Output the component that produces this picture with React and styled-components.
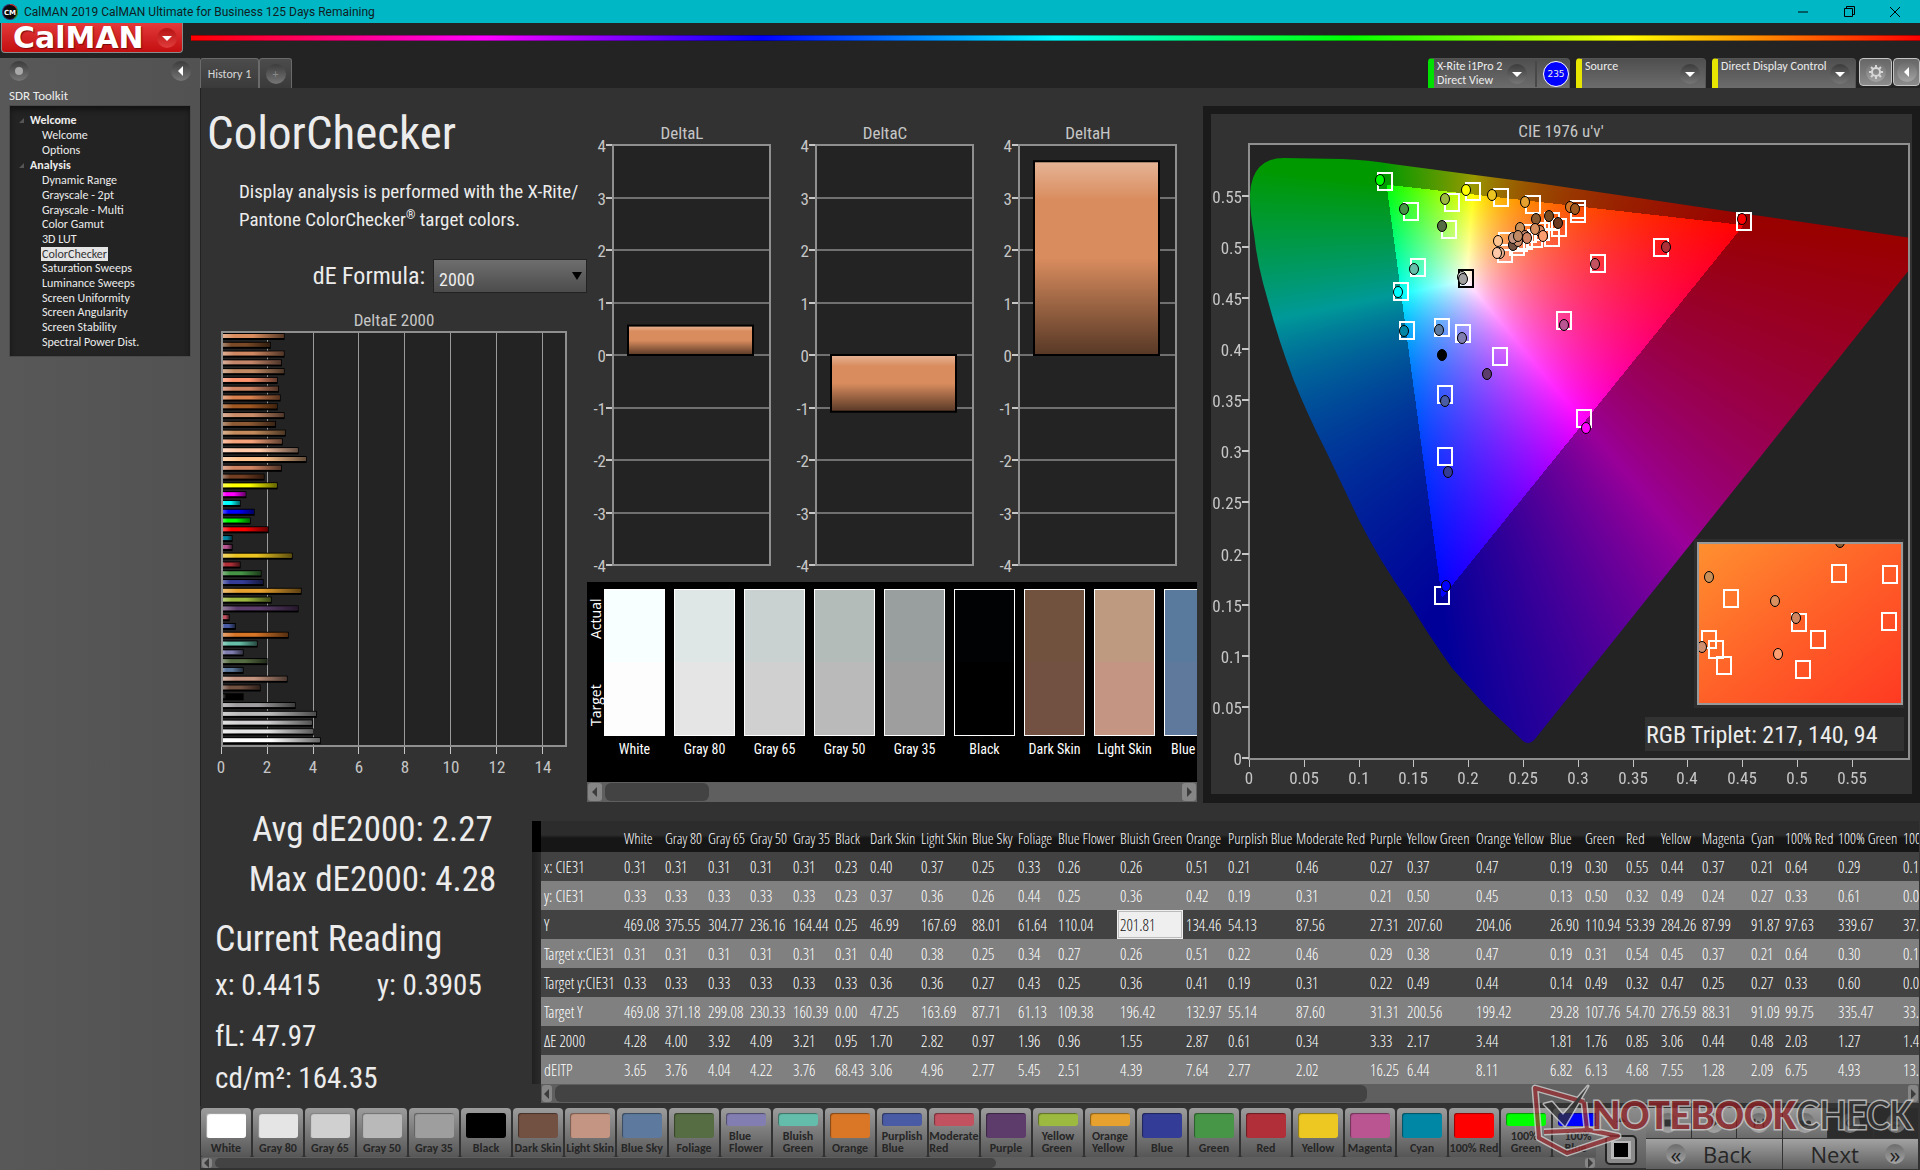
import React, { useEffect, useRef } from 'react';
import styled, { createGlobalStyle, css } from 'styled-components';

const ui = '"Carlito", "Lato", sans-serif';
const report = '"Roboto Condensed", "Roboto", sans-serif';
const narrow = '"Open Sans Condensed Light", "Roboto Condensed", "Open Sans", sans-serif';

const GlobalStyle = createGlobalStyle`
	* {
		box-sizing: border-box;
	}

	body {
		margin: 0;
		background: #232323;
		color: #ececec;
		font-family: ${ui};
		font-size: 12px;
		overflow: hidden;
	}

	button,
	select {
		margin: 0;
		padding: 0;
		border: 0;
		font: inherit;
		color: inherit;
	}

	a {
		color: inherit;
		text-decoration: none;
	}
`;

/* ---------- data ---------- */

const tree = [
	{ name: 'Welcome', items: ['Welcome', 'Options'] },
	{
		name: 'Analysis',
		items: [
			'Dynamic Range',
			'Grayscale - 2pt',
			'Grayscale - Multi',
			'Color Gamut',
			'3D LUT',
			'ColorChecker',
			'Saturation Sweeps',
			'Luminance Sweeps',
			'Screen Uniformity',
			'Screen Angularity',
			'Screen Stability',
			'Spectral Power Dist.',
		],
	},
];

// top to bottom: [color, dE2000]
const deltaE = [
	['#d98c5e', 2.72], ['#7a4a26', 2.12], ['#cf8862', 2.72], ['#c4866a', 2.6], ['#c28a64', 2.72],
	['#ff9470', 2.42], ['#cf8464', 2.48], ['#d8804e', 2.55], ['#a05822', 2.42], ['#cb8c6a', 2.72],
	['#8e5a34', 2.35], ['#c48c5c', 2.77], ['#f5a27a', 2.64], ['#ffc8a8', 3.33], ['#ffc490', 3.68],
	['#cf8462', 2.6], ['#733e22', 1.85], ['#ffff00', 2.42], ['#ff00ff', 1.06], ['#00ffff', 0.81],
	['#0000ff', 1.42], ['#00ff00', 1.25], ['#ff0000', 2.03], ['#0086a4', 0.46], ['#ba5493', 0.46],
	['#ebc422', 3.07], ['#b03038', 0.81], ['#469546', 1.72], ['#343c96', 1.81], ['#e6a02e', 3.46],
	['#9cba40', 2.16], ['#5c3d6b', 3.33], ['#c45260', 0.33], ['#4a5ca4', 0.6], ['#d87628', 2.9],
	['#66bfa8', 1.55], ['#807eb0', 0.94], ['#566c42', 1.98], ['#5d799d', 0.94], ['#c49580', 2.85],
	['#735141', 1.68], ['#000000', 0.94], ['#9f9d9f', 3.2], ['#bababa', 4.12], ['#d2d0d2', 3.94],
	['#e5e5e5', 3.99], ['#ffffff', 4.29],
];

const deltas = [
	{ title: 'DeltaL', value: 0.56 },
	{ title: 'DeltaC', value: -1.08 },
	{ title: 'DeltaH', value: 3.69 },
];

const swatches = [
	['White', '#f8ffff', '#fdfdfd'],
	['Gray 80', '#dfe7e6', '#e5e5e5'],
	['Gray 65', '#cad2d1', '#d0d0d0'],
	['Gray 50', '#b4bcba', '#bababa'],
	['Gray 35', '#999f9e', '#9e9e9e'],
	['Black', '#010204', '#000000'],
	['Dark Skin', '#71523e', '#735142'],
	['Light Skin', '#be9a80', '#c49582'],
	['Blue Sky', '#5a7a9d', '#5f799d'],
];

const patches = [
	['White', '#ffffff'], ['Gray 80', '#e5e5e5'], ['Gray 65', '#d0d0d0'], ['Gray 50', '#b9b9b9'],
	['Gray 35', '#9e9e9e'], ['Black', '#000000'], ['Dark Skin', '#735142'], ['Light Skin', '#c49582'],
	['Blue Sky', '#5d7a9e'], ['Foliage', '#566c42'], ['Blue Flower', '#827eb1'], ['Bluish Green', '#64bdaa'],
	['Orange', '#d97727'], ['Purplish Blue', '#4a5ba5'], ['Moderate Red', '#c35260'], ['Purple', '#5d3c6b'],
	['Yellow Green', '#9dba40'], ['Orange Yellow', '#e6a12e'], ['Blue', '#333c96'], ['Green', '#479648'],
	['Red', '#b02f39'], ['Yellow', '#edc822'], ['Magenta', '#ba5592'], ['Cyan', '#0087a5'],
	['100% Red', '#ff0000'], ['100% Green', '#00ff00'], ['100% Blue', '#0000ff'],
];

const columns = [
	['White', 41], ['Gray 80', 43], ['Gray 65', 42], ['Gray 50', 43], ['Gray 35', 42], ['Black', 35],
	['Dark Skin', 51], ['Light Skin', 51], ['Blue Sky', 46], ['Foliage', 40], ['Blue Flower', 62],
	['Bluish Green', 66], ['Orange', 42], ['Purplish Blue', 68], ['Moderate Red', 74], ['Purple', 37],
	['Yellow Green', 69], ['Orange Yellow', 74], ['Blue', 35], ['Green', 41], ['Red', 35], ['Yellow', 41],
	['Magenta', 49], ['Cyan', 34], ['100% Red', 53], ['100% Green', 65], ['100% Blue', 60],
];

const rows = [
	['x: CIE31', '0.31 0.31 0.31 0.31 0.31 0.23 0.40 0.37 0.25 0.33 0.26 0.26 0.51 0.21 0.46 0.27 0.37 0.47 0.19 0.30 0.55 0.44 0.37 0.21 0.64 0.29 0.15'],
	['y: CIE31', '0.33 0.33 0.33 0.33 0.33 0.23 0.37 0.36 0.26 0.44 0.25 0.36 0.42 0.19 0.31 0.21 0.50 0.45 0.13 0.50 0.32 0.49 0.24 0.27 0.33 0.61 0.06'],
	['Y', '469.08 375.55 304.77 236.16 164.44 0.25 46.99 167.69 88.01 61.64 110.04 201.81 134.46 54.13 87.56 27.31 207.60 204.06 26.90 110.94 53.39 284.26 87.99 91.87 97.63 339.67 37.05'],
	['Target x:CIE31', '0.31 0.31 0.31 0.31 0.31 0.31 0.40 0.38 0.25 0.34 0.27 0.26 0.51 0.22 0.46 0.29 0.38 0.47 0.19 0.31 0.54 0.45 0.37 0.21 0.64 0.30 0.15'],
	['Target y:CIE31', '0.33 0.33 0.33 0.33 0.33 0.33 0.36 0.36 0.27 0.43 0.25 0.36 0.41 0.19 0.31 0.22 0.49 0.44 0.14 0.49 0.32 0.47 0.25 0.27 0.33 0.60 0.06'],
	['Target Y', '469.08 371.18 299.08 230.33 160.39 0.00 47.25 163.69 87.71 61.13 109.38 196.42 132.97 55.14 87.60 31.31 200.56 199.42 29.28 107.76 54.70 276.59 88.31 91.09 99.75 335.47 33.86'],
	['ΔE 2000', '4.28 4.00 3.92 4.09 3.21 0.95 1.70 2.82 0.97 1.96 0.96 1.55 2.87 0.61 0.34 3.33 2.17 3.44 1.81 1.76 0.85 3.06 0.44 0.48 2.03 1.27 1.42'],
	['dEITP', '3.65 3.76 4.04 4.22 3.76 68.43 3.06 4.96 2.77 5.45 2.51 4.39 7.64 2.77 2.02 16.25 6.44 8.11 6.82 6.13 4.68 7.55 1.28 2.09 6.75 4.93 13.04'],
];

// chart pixels inside the u'v' plot
const targets = [
	[135, 38], [223, 48], [202, 59], [251, 54], [161, 68], [199, 86], [283, 61], [328, 66], [328, 70],
	[494, 78], [411, 104], [348, 120], [302, 78], [309, 84], [302, 94], [292, 88], [285, 95], [279, 90],
	[275, 97], [270, 99], [267, 103], [256, 98], [255, 110], [168, 124], [151, 148], [157, 187],
	[192, 184], [213, 190], [314, 177], [250, 213], [195, 251], [334, 275], [195, 313], [192, 452],
];

const measured = [
	[130, 36, '#00ff00'], [216, 46, '#ffff00'], [195, 55, '#9cba40'], [242, 51, '#ebc422'],
	[154, 65, '#469546'], [192, 82, '#566c42'], [275, 58, '#e6a02e'], [320, 63, '#d87628'],
	[325, 65, '#a05a20'], [492, 75, '#ff0000'], [416, 103, '#b03038'], [345, 120, '#c45260'],
	[299, 72, '#7a4a20'], [286, 75, '#8a5a30'], [308, 79, '#6b3a20'], [270, 84, '#c89058'],
	[290, 87, '#cf8560'], [285, 85, '#d9905f'], [293, 92, '#ff9e70'], [275, 92, '#c4866a'],
	[277, 94, '#cf8464'], [263, 101, '#735141'], [268, 97, '#cb8c6a'], [263, 94, '#c49580'],
	[268, 92, '#c28a64'], [248, 97, '#ffc490'], [250, 109, '#e8b090'], [247, 109, '#ffc8a8'],
	[164, 125, '#66bfa8'], [148, 148, '#00ffff'], [154, 187, '#0086a4'], [189, 186, '#5d799d'],
	[212, 194, '#807eb0'], [314, 181, '#ba5493'], [192, 211, '#000000'], [237, 230, '#5c3d6b'],
	[195, 257, '#4a5ca4'], [336, 284, '#ff00ff'], [198, 328, '#343c96'], [196, 442, '#0000ff'],
];

const insetTargets = [
	[141, 31], [192, 32], [33, 56], [101, 80], [191, 79], [120, 97], [11, 97], [18, 107], [26, 123], [105, 127],
];

const insetMeasured = [
	[142, -1, '#8a5a30'], [11, 34, '#c89058'], [77, 58, '#d9905f'], [98, 75, '#cf8560'],
	[4, 104, '#d09070'], [80, 111, '#ff9e70'],
];

/* ---------- window chrome ---------- */

const Page = styled.div`
	display: flex;
	flex-direction: column;
	height: 100vh;
`;

const TitleBar = styled.header`
	display: flex;
	align-items: center;
	gap: 6px;
	flex: none;
	height: 23px;
	padding-left: 2px;
	background: #00b7c6;
	color: #101c1e;
	font-family: Roboto, 'Open Sans', sans-serif;
	font-size: 12px;
`;

const WindowButtons = styled.div`
	display: flex;
	margin-left: auto;
	padding-right: 2px;
`;

const WindowButton = styled.button`
	display: flex;
	align-items: center;
	justify-content: center;
	width: 46px;
	height: 22px;
	background: none;
`;

const Brand = styled.div`
	display: flex;
	align-items: flex-start;
	gap: 8px;
	flex: none;
	height: 35px;
	padding-left: 1px;
`;

const LogoButton = styled.button`
	display: flex;
	align-items: center;
	justify-content: space-between;
	width: 182px;
	height: 30px;
	padding: 0 5px 0 11px;
	border: 1px solid #8a8a8a;
	border-top: 0;
	border-radius: 0 0 4px 4px;
	background: linear-gradient(#e23a3a, #c40e10);
	color: #fff;
	font: bold 30px 'DejaVu Sans', sans-serif;
	line-height: 29px;
	text-shadow: 1px 1px 1px #7a0a0a;
`;

const Rainbow = styled.div`
	flex: 1;
	height: 6px;
	margin-top: 12px;
	border: solid rgba(0, 0, 0, 0.35);
	border-width: 1px 0;
	background: linear-gradient(90deg, #f00, #f0f 17%, #00f 33%, #0ff 50%, #0f0 67%, #ff0 83%, #f00);
	background-origin: border-box;
`;

const Body = styled.div`
	display: flex;
	flex: 1;
	min-height: 0;
`;

const Knob = styled.button`
	display: flex;
	align-items: center;
	justify-content: center;
	flex: none;
	width: 20px;
	height: 20px;
	border-radius: 50%;
	background: ${(p) => (p.$light ? 'linear-gradient(#6c6c6c, #a4a4a4)' : 'linear-gradient(#3c3c3c, #767676)')};
	color: ${(p) => p.$color || '#fff'};
`;

const RedKnob = styled.span`
	display: flex;
	align-items: center;
	justify-content: center;
	width: 20px;
	height: 20px;
	border-radius: 50%;
	background: linear-gradient(#b51414, #e23c3c);
`;

/* ---------- sidebar ---------- */

const Sidebar = styled.aside`
	flex: none;
	width: 200px;
	padding: 3px 9px 0;
	background: linear-gradient(90deg, #585858, #525252);
`;

const SidebarTop = styled.div`
	display: flex;
	justify-content: space-between;
`;

const SidebarTitle = styled.div`
	margin: 7px 0 1px;
	font-size: 13px;
	line-height: 16px;
`;

const Tree = styled.nav`
	padding: 6px 0 7px 9px;
	border: 1px solid #4a4a4a;
	background: #232323;
	box-shadow: inset 0 4px 5px #141414;
`;

const TreeGroup = styled.div`
	display: flex;
	align-items: center;
	gap: 6px;
	height: 16px;
	font-weight: bold;
`;

const TreeItems = styled.div`
	display: grid;
	grid-auto-rows: 1fr;
	justify-items: start;
	height: ${(p) => (p.$count > 2 ? '176px' : '29px')};
	padding-left: 22px;
`;

const TreeItem = styled.a`
	align-self: center;
	padding: 0 1px;
	line-height: 14px;
	${(p) =>
		p.$selected &&
		css`
			background: #e4e4e4;
			color: #333;
		`}
`;

/* ---------- tab bar ---------- */

const Content = styled.main`
	display: flex;
	flex-direction: column;
	flex: 1;
	min-width: 0;
`;

const TabBar = styled.div`
	display: flex;
	flex: none;
	height: 30px;
`;

const Tab = styled.button`
	display: flex;
	align-items: center;
	justify-content: center;
	width: ${(p) => (p.$add ? '33px' : '59px')};
	border: 1px solid #6a6a6a;
	border-bottom: 0;
	border-radius: 3px 3px 0 0;
	background: linear-gradient(#4c4c4c, #3a3a3a);
	color: #d8d8d8;
`;

const Devices = styled.div`
	display: flex;
	gap: 6px;
	margin-left: auto;
`;

const Device = styled.div`
	display: flex;
	align-items: center;
	width: ${(p) => p.$width};
	padding-right: ${(p) => (p.$meter ? '0' : '5px')};
	border: 1px solid #555;
	border-bottom: 0;
	border-left: 6px solid ${(p) => p.$state};
	border-radius: 4px 4px 0 0;
	background: linear-gradient(#4f4f4f, #6c6c6c);
	line-height: 14px;
`;

const DeviceName = styled.div`
	flex: 1;
	align-self: flex-start;
	padding-left: 3px;
	white-space: nowrap;
`;

const LevelCell = styled.div`
	display: flex;
	margin-left: 8px;
	padding-left: 6px;
	border-left: 2px solid #484848;
`;

const Level = styled.div`
	display: flex;
	align-items: center;
	justify-content: center;
	width: 26px;
	height: 26px;
	border: 1px solid #fff;
	border-radius: 50%;
	background: #00f;
	font: 9px 'DejaVu Sans', sans-serif;
`;

const Tools = styled.div`
	display: flex;
	gap: 1px;
	margin-left: -3px;
`;

const Tool = styled.button`
	display: flex;
	align-items: center;
	justify-content: center;
	width: ${(p) => (p.$last ? '27px' : '33px')};
	height: 28px;
	border: 1px solid #c4c4c4;
	border-radius: 4px;
	background: linear-gradient(#666, #8c8c8c);
`;

/* ---------- report ---------- */

const Report = styled.section`
	display: flex;
	flex-direction: column;
	flex: 1;
	min-height: 0;
	border-left: 1px solid #222;
	background: #323232;
	font-family: ${report};
`;

const Upper = styled.div`
	display: grid;
	grid-template-columns: 386px 616px 1fr;
`;

const Intro = styled.div`
	padding-top: 17px;
`;

const Heading = styled.h1`
	margin: 0 0 17px 6px;
	font-size: 47px;
	font-weight: normal;
	line-height: 56px;
`;

const Description = styled.p`
	margin: 0 0 25px 38px;
	font-size: 19px;
	line-height: 28px;
	white-space: nowrap;

	sup {
		font-size: 12px;
		line-height: 12px;
	}
`;

const Formula = styled.div`
	display: flex;
	justify-content: flex-end;
	gap: 8px;
	margin-bottom: 8px;
	font-size: 24px;
	line-height: 34px;
`;

const FormulaSelect = styled.select`
	width: 154px;
	height: 34px;
	padding: 3px 0 0 5px;
	border: 1px solid #222;
	background: linear-gradient(#6e6e6e, #4c4c4c);
	font-size: 18px;
	appearance: none;
`;

const SelectBox = styled.div`
	display: grid;
	align-items: center;

	& > * {
		grid-area: 1 / 1;
	}

	& > svg {
		justify-self: end;
		margin-right: 5px;
		pointer-events: none;
	}
`;

const Chart = styled.svg`
	display: block;
	width: 100%;
	font-family: ${report};
	font-size: 17px;
	fill: #c6c6c6;
`;

const Middle = styled.div`
	padding: 30px 6px 0 0;
`;

const Strip = styled.div`
	display: flex;
	height: 200px;
	padding-top: 7px;
	overflow: hidden;
	background: #000;
`;

const StripSide = styled.div`
	display: flex;
	justify-content: space-between;
	flex: none;
	width: 17px;
	height: 147px;
	padding: 10px 0;
	writing-mode: vertical-rl;
	transform: rotate(180deg);
	color: #fff;
	font: 14px 'Open Sans', sans-serif;
	line-height: 17px;
`;

const StripItem = styled.div`
	flex: none;
	width: 70px;
	color: #fff;
	font-size: 14px;
	line-height: 26px;
	text-align: center;
	white-space: nowrap;
`;

const StripColor = styled.div`
	width: 61px;
	height: 147px;
	border: 1px solid #fff;
	background: linear-gradient(${(p) => p.$actual} 50%, ${(p) => p.$target} 50%);
`;

const StripName = styled.div`
	width: 61px;
`;

const ScrollTrack = styled.div`
	display: flex;
	align-items: center;
	height: ${(p) => p.$height};
	padding: 1px;
	background: #5f5f5f;
`;

const ScrollArrow = styled.button`
	display: flex;
	align-items: center;
	justify-content: center;
	flex: none;
	width: ${(p) => (p.$small ? '10px' : '14px')};
	height: 100%;
	border-radius: 3px;
	background: #868686;
	color: #3c3c3c;
`;

const ScrollThumb = styled.div`
	width: ${(p) => p.$width};
	height: 100%;
	margin: 0 auto 0 3px;
	border-radius: 6px;
	background: #434343;
`;

const CiePanel = styled.div`
	margin-top: 18px;
	border: 8px solid #1a1a1a;
	border-bottom-width: 9px;
`;

const Lower = styled.div`
	display: flex;
	min-width: 0;
	margin-top: 2px;
`;

const Readings = styled.div`
	flex: none;
	width: 331px;
	padding: 0 0 0 14px;
	font-size: 29px;
	line-height: 40px;
	white-space: nowrap;
`;

const Stat = styled.div`
	padding-right: 2px;
	font-size: 35px;
	line-height: 50px;
	text-align: center;
`;

const ReadingTitle = styled.h2`
	margin: 8px 0 0;
	font-size: 36px;
	font-weight: normal;
	line-height: 52px;
`;

const ReadingRow = styled.div`
	display: grid;
	grid-template-columns: ${(p) => (p.$pair ? '162px 1fr' : '1fr')};
	margin-bottom: ${(p) => (p.$pair ? '11px' : '2px')};
`;

const DataPane = styled.div`
	flex: 1;
	min-width: 0;
	margin: 16px 1px 0 0;
	overflow: hidden;
`;

const DataClip = styled.div`
	overflow: hidden;
`;

const DataTable = styled.table`
	width: 1428px;
	table-layout: fixed;
	border-collapse: collapse;
	font-family: ${narrow};
	font-size: 16px;
	color: #fff;

	th,
	td {
		height: 29px;
		padding: 0 0 0 3px;
		font-weight: normal;
		text-align: left;
		white-space: nowrap;
		line-height: 20px;
	}

	thead th {
		height: 31px;
		padding-top: 2px;
		background: linear-gradient(#2c2c2c 45%, #161616 55%);
		font-size: 15px;
	}

	thead th:first-child {
		background: #000;
	}

	tbody tr {
		background: #424242;
	}

	tbody tr:nth-child(even) {
		background: #808080;
	}

	tbody td:first-child {
		background: linear-gradient(90deg, #202020, #2b2b2b);
	}
`;

const ActiveCell = styled.td`
	background: #efefef;
	box-shadow: inset 0 0 0 1px #efefef, inset 0 0 0 2px #bbb;
	color: #111;
`;

const DataScroll = styled.div`
	margin-left: 9px;
`;

/* ---------- footer ---------- */

const Footer = styled.footer`
	position: relative;
	display: flex;
	flex: none;
	height: 64px;
	padding: 2px 2px 2px 1px;
	background: #323232;
	color: #262626;
`;

const PatchPane = styled.div`
	flex: 1;
	min-width: 0;
	overflow: hidden;
`;

const PatchList = styled.div`
	display: flex;
	gap: 2px;
	overflow: hidden;
`;

const Patch = styled.button`
	display: flex;
	flex-direction: column;
	align-items: center;
	justify-content: space-between;
	flex: none;
	width: 50px;
	height: 49px;
	padding: 5px 0 3px;
	border-radius: 4px 4px 2px 2px;
	background: linear-gradient(#9c9c9c, #565656);
	line-height: 12px;
	text-align: left;
`;

const PatchColor = styled.span`
	flex: 1;
	width: 40px;
	margin-bottom: 4px;
	border-radius: 3px;
	background: ${(p) => p.$color};
	box-shadow: inset 1px 1px 1px rgba(0, 0, 0, 0.4);
`;

const PatchName = styled.span`
	width: ${(p) => (p.$wrap ? 'min-content' : 'auto')};
	white-space: ${(p) => (p.$wrap ? 'normal' : 'nowrap')};
	font-weight: bold;
`;

const PatternPane = styled.div`
	display: grid;
	grid-template-rows: 23px 38px;
	flex: none;
	width: 50px;
	background: linear-gradient(#8c8c8c, #5c5c5c);
`;

const PatternButton = styled.button`
	display: flex;
	align-items: center;
	justify-content: center;
	background: none;
`;

const Controls = styled.div`
	display: grid;
	grid-template-columns: repeat(6, 1fr);
	grid-template-rows: 30px 30px;
	gap: 1px;
	flex: none;
	width: 272px;
`;

const Control = styled.button`
	display: flex;
	align-items: center;
	justify-content: center;
	background: ${(p) => (p.$off ? '#2c2c2c' : 'linear-gradient(#9a9a9a, #6a6a6a)')};
	color: #3a3a3a;
`;

const NavButton = styled.button`
	display: flex;
	align-items: center;
	justify-content: space-between;
	grid-column: span 3;
	padding: ${(p) => (p.$back ? '0 30px 0 20px' : '0 13px 0 28px')};
	background: linear-gradient(#a2a2a2, #5e5e5e);
	font-family: 'Open Sans', sans-serif;
	font-size: 22px;
	line-height: 28px;
`;

const Watermark = styled.div`
	position: absolute;
	right: 8px;
	bottom: 13px;
	display: flex;
	align-items: flex-start;
	opacity: 0.75;
	pointer-events: none;
`;

const WatermarkText = styled.span`
	margin-left: -30px;
	color: #333;
	font: 43px ${ui};
	line-height: 64px;
	-webkit-text-stroke: 3px #d0d0d0;
	paint-order: stroke fill;

	b {
		color: #8f1f24;
	}
`;

/* ---------- small drawings ---------- */

const Arrow = ({ dir = 'down', size = 10 }) => {
	const points = {
		up: '0,7 10,7 5,2',
		down: '0,3 10,3 5,8',
		left: '7,0 7,10 2,5',
		right: '3,0 3,10 8,5',
	};

	return (
		<svg width={size} height={size} viewBox="0 0 10 10" aria-hidden="true">
			<polygon points={points[dir]} fill="currentColor" />
		</svg>
	);
};

const Gear = () => (
	<svg width="16" height="16" viewBox="0 0 16 16" fill="none" stroke="#d6d6d6" aria-hidden="true">
		<circle cx="8" cy="8" r="4" strokeWidth="2" />
		{[0, 45, 90, 135, 180, 225, 270, 315].map((a) => (
			<path key={a} d="M8 1v3" strokeWidth="2" transform={`rotate(${a} 8 8)`} />
		))}
	</svg>
);

const AppIcon = () => (
	<svg width="16" height="16" viewBox="0 0 16 16" aria-hidden="true">
		<circle cx="8" cy="8" r="8" fill="#3b2a66" />
		<path d="M8 0a8 8 0 0 1 7 4L8 8z" fill="#c33" />
		<path d="M15 4a8 8 0 0 1-3 11L8 8z" fill="#393" />
		<circle cx="8" cy="8" r="7" fill="#0a0a0a" />
		<text x="8" y="11" fill="#fff" fontSize="7" fontWeight="bold" textAnchor="middle" fontFamily="DejaVu Sans">
			CM
		</text>
	</svg>
);

const controlIcons = [
	<rect x="4" y="4" width="8" height="8" />,
	<path d="M5 3l8 5-8 5z" />,
	<path d="M2 3h2v10H2zM12 3h2v10h-2zM6 5l5 3-5 3z" />,
	<path d="M1 8a3 3 0 0 1 6 0 4 4 0 0 0 8 0 3 3 0 0 0-6 0 4 4 0 0 1-8 0z" />,
	<path d="M8 3a5 5 0 1 0 5 5h-2a3 3 0 1 1-3-3z" />,
	<path d="M4 4h8v2H4zM4 10h8v2H4z" />,
];

/* ---------- charts ---------- */

const barShade = (dir) => (
	<linearGradient id={`shade-${dir}`} x1="0" y1="0" x2={dir === 'h' ? 1 : 0} y2={dir === 'h' ? 0 : 1}>
		<stop offset="0" stopColor="#fff" stopOpacity="0.35" />
		<stop offset="0.2" stopColor="#fff" stopOpacity="0" />
		<stop offset="0.5" stopColor="#000" stopOpacity="0" />
		<stop offset="1" stopColor="#000" stopOpacity="0.6" />
	</linearGradient>
);

const DeltaEChart = () => {
	const step = 413 / deltaE.length;

	return (
		<Chart viewBox="0 0 386 482" role="img" aria-label="DeltaE 2000">
			<defs>{barShade('h')}</defs>
			<text x="193" y="25" textAnchor="middle">
				DeltaE 2000
			</text>
			<rect x="21" y="31" width="345" height="414" fill="#232323" />
			{[2, 4, 6, 8, 10, 12, 14].map((n) => (
				<rect key={n} x={20 + n * 23 - (n > 4 ? 1 : 0)} y="31" width="1" height="414" fill="#9a9a9a" />
			))}
			{deltaE.map(([color, value], i) => (
				<g key={i}>
					<rect x="20" y={32 + i * step} width={value * 23 + 1} height="7" fill="#000" />
					<rect x="21" y={33 + i * step} width={value * 23 - 1} height="4" fill={color} />
					<rect x="21" y={33 + i * step} width={value * 23 - 1} height="4" fill="url(#shade-h)" />
				</g>
			))}
			<rect x="21" y="31" width="344" height="414" fill="none" stroke="#8f8f8f" strokeWidth="2" />
			{[0, 2, 4, 6, 8, 10, 12, 14].map((n) => (
				<g key={n}>
					<rect x={20 + n * 23 - (n > 4 ? 1 : 0)} y="446" width="1" height="7" />
					<text x={20 + n * 23} y="472" textAnchor="middle">
						{n}
					</text>
				</g>
			))}
		</Chart>
	);
};

const DeltaCharts = () => (
	<Chart viewBox="0 0 610 464" role="img" aria-label="DeltaL, DeltaC, DeltaH">
		<defs>{barShade('v')}</defs>
		{deltas.map(({ title, value }, i) => {
			const unit = 420 / 8;
			const zero = 27 + 4 * unit;
			const top = value > 0 ? zero - value * unit : zero;
			const height = Math.abs(value) * unit;

			return (
				<g key={title} transform={`translate(${26 + i * 203} 0)`}>
					<text x="69" y="21" textAnchor="middle">
						{title}
					</text>
					<rect x="0" y="27" width="157" height="420" fill="#232323" />
					{[4, 3, 2, 1, 0, -1, -2, -3, -4].map((n) => (
						<g key={n}>
							<rect x="-7" y={Math.round(zero - n * unit) - 1} width="7" height="2" />
							<rect x="0" y={Math.round(zero - n * unit) - 1} width="157" height="2" fill="#707070" />
							<text x="-7" y={Math.round(zero - n * unit) + 7} textAnchor="end">
								{n}
							</text>
						</g>
					))}
					<rect x="0" y="27" width="157" height="420" fill="none" stroke="#8f8f8f" strokeWidth="2" />
					<rect x="15" y={top} width="125" height={height} fill="#d98c5e" />
					<rect x="15" y={top} width="125" height={height} fill="url(#shade-v)" stroke="#000" strokeWidth="2" />
				</g>
			);
		})}
	</Chart>
);

// brightest RGB for a u'v' coordinate, dimmed outside the sRGB triangle
const gamutColor = (u, v) => {
	const d = 6 * u - 16 * v + 12;
	const x = (9 * u) / d;
	const y = (4 * v) / d;
	const X = x / y;
	const Z = (1 - x - y) / y;
	const rgb = [
		3.2406 * X - 1.5372 - 0.4986 * Z,
		-0.9689 * X + 1.8758 + 0.0415 * Z,
		0.0557 * X - 0.204 + 1.057 * Z,
	];
	const max = Math.max(...rgb);
	const dim = Math.min(...rgb) < 0 ? 0.6 : 1;

	return rgb.map((c) => Math.round(255 * dim * Math.max(0, c / max) ** 0.88));
};

const Gamut = () => {
	const ref = useRef(null);

	useEffect(() => {
		const ctx = ref.current.getContext('2d');
		const image = ctx.createImageData(660, 615);

		for (let py = 0; py < 615; py++) {
			for (let px = 0; px < 660; px++) {
				const [r, g, b] = gamutColor(px / 1096, (615 - py) / 1022);
				const i = (py * 660 + px) * 4;
				image.data[i] = r;
				image.data[i + 1] = g;
				image.data[i + 2] = b;
				image.data[i + 3] = 255;
			}
		}
		ctx.putImageData(image, 0, 0);
	}, []);

	return <canvas ref={ref} width="660" height="615" />;
};

const locus =
	'M1 50Q3 14 35 14L93 15Q120 16 143 20L226 31L288 39L491 69L683 97L660 126L516 307L286 595Q279 603 272 595' +
	'L235 560L203 524Q180 492 159 457Q130 416 109 374L77 307Q60 274 45 237Q30 198 19 157Q8 120 5 90Q1 70 1 50Z';

const Target = ({ x, y, color = '#fff' }) => (
	<rect x={x - 7} y={y - 9} width="14" height="17" fill="none" stroke={color} strokeWidth="2" />
);

const Dot = ({ x, y, color }) => <ellipse cx={x} cy={y} rx="4.5" ry="5.5" fill={color} stroke="#000" />;

const CieChart = () => (
	<Chart viewBox="0 0 701 680" role="img" aria-label="CIE 1976 u'v'">
		<defs>
			<clipPath id="locus">
				<path d={locus} />
			</clipPath>
			<clipPath id="plot">
				<rect width="660" height="615" />
			</clipPath>
			<clipPath id="inset">
				<rect width="204" height="161" />
			</clipPath>
			<linearGradient id="inset-fill" x1="0" y1="0" x2="1" y2="1">
				<stop offset="0" stopColor="#ff9030" />
				<stop offset="0.5" stopColor="#ff6028" />
				<stop offset="1" stopColor="#ff3a22" />
			</linearGradient>
		</defs>
		<text x="350" y="23" textAnchor="middle">
			CIE 1976 u'v'
		</text>
		<g transform="translate(38 30)">
			<rect width="660" height="615" fill="#232323" />
			<g clipPath="url(#plot)">
				<foreignObject width="660" height="615" clipPath="url(#locus)">
					<Gamut />
				</foreignObject>
			</g>
			<rect width="660" height="615" fill="none" stroke="#8f8f8f" strokeWidth="2" />
			{[0, 0.05, 0.1, 0.15, 0.2, 0.25, 0.3, 0.35, 0.4, 0.45, 0.5, 0.55].map((n) => (
				<g key={n}>
					<rect x={Math.round(n * 1096)} y="616" width="1" height="7" />
					<text x={Math.round(n * 1096)} y="640" textAnchor="middle">
						{n}
					</text>
					<rect x="-7" y={613 - Math.round(n * 1022)} width="7" height="2" />
					<text x="-7" y={621 - Math.round(n * 1022)} textAnchor="end">
						{n}
					</text>
				</g>
			))}
			<g transform="translate(1 0)">
				{targets.map(([x, y], i) => (
					<Target key={i} x={x} y={y} />
				))}
				<Target x={216} y={135} color="#000" />
				<Dot x={212} y={133} color="#c8c8c8" />
				<Dot x={213} y={135} color="#a0a0a0" />
				{measured.map(([x, y, color], i) => (
					<Dot key={i} x={x} y={y} color={color} />
				))}
			</g>
			<rect x="445" y="395" width="210" height="169" fill="#2d2d2d" />
			<g transform="translate(449 399)">
				<g clipPath="url(#inset)">
					<rect width="204" height="161" fill="url(#inset-fill)" />
					{insetTargets.map(([x, y], i) => (
						<Target key={i} x={x} y={y} />
					))}
					{insetMeasured.map(([x, y, color], i) => (
						<Dot key={i} x={x} y={y} color={color} />
					))}
				</g>
				<rect width="204" height="161" fill="none" stroke="#999" strokeWidth="2" />
			</g>
			<rect x="396" y="573" width="259" height="34" fill="#323232" />
			<text x="397" y="599" fill="#ececec" fontSize="24">
				RGB Triplet: 217, 140, 94
			</text>
		</g>
	</Chart>
);

/* ---------- page parts ---------- */

const Scrollbar = ({ height, thumb, small }) => (
	<ScrollTrack $height={height}>
		<ScrollArrow $small={small} aria-label="Scroll left">
			<Arrow dir="left" />
		</ScrollArrow>
		<ScrollThumb $width={thumb} />
		<ScrollArrow $small={small} aria-label="Scroll right">
			<Arrow dir="right" />
		</ScrollArrow>
	</ScrollTrack>
);

const Navigation = () => (
	<Sidebar>
		<SidebarTop>
			<Knob aria-label="Record">
				<svg width="8" height="8" aria-hidden="true">
					<circle cx="4" cy="4" r="4" fill="#a8a8a8" />
				</svg>
			</Knob>
			<Knob aria-label="Collapse">
				<Arrow dir="left" />
			</Knob>
		</SidebarTop>
		<SidebarTitle>SDR Toolkit</SidebarTitle>
		<Tree>
			{tree.map((group) => (
				<React.Fragment key={group.name}>
					<TreeGroup>
						<svg width="5" height="5" aria-hidden="true">
							<path d="M5 0v5H0z" fill="#555" />
						</svg>
						{group.name}
					</TreeGroup>
					<TreeItems $count={group.items.length}>
						{group.items.map((item) => (
							<TreeItem key={item} href="#" $selected={item === 'ColorChecker'}>
								{item}
							</TreeItem>
						))}
					</TreeItems>
				</React.Fragment>
			))}
		</Tree>
	</Sidebar>
);

const Tabs = () => (
	<TabBar>
		<Tab>History 1</Tab>
		<Tab $add aria-label="Add history">
			<Knob as="span" $color="#888">
				+
			</Knob>
		</Tab>
		<Devices>
			<Device $width="142px" $state="#00e000" $meter>
				<DeviceName>
					X-Rite i1Pro 2<br />
					Direct View
				</DeviceName>
				<Knob aria-label="Meter menu">
					<Arrow />
				</Knob>
				<LevelCell>
					<Level>235</Level>
				</LevelCell>
			</Device>
			<Device $width="130px" $state="#e6e600">
				<DeviceName>Source</DeviceName>
				<Knob aria-label="Source menu">
					<Arrow />
				</Knob>
			</Device>
			<Device $width="144px" $state="#e6e600">
				<DeviceName>Direct Display Control</DeviceName>
				<Knob aria-label="Display menu">
					<Arrow />
				</Knob>
			</Device>
			<Tools>
				<Tool aria-label="Settings">
					<Knob as="span" $light>
						<Gear />
					</Knob>
				</Tool>
				<Tool $last aria-label="Collapse devices">
					<Knob as="span" $light>
						<Arrow dir="left" />
					</Knob>
				</Tool>
			</Tools>
		</Devices>
	</TabBar>
);

const Measurements = () => (
	<DataPane>
		<DataClip>
			<DataTable>
				<colgroup>
					<col width="9" />
					<col width="80" />
					{columns.map(([name, width]) => (
						<col key={name} width={width} />
					))}
				</colgroup>
				<thead>
					<tr>
						<th />
						<th />
						{columns.map(([name]) => (
							<th key={name} scope="col">
								{name}
							</th>
						))}
					</tr>
				</thead>
				<tbody>
					{rows.map(([label, values]) => (
						<tr key={label}>
							<td />
							<th scope="row">{label}</th>
							{values.split(' ').map((value, i) => {
								const Cell = value === '201.81' ? ActiveCell : 'td';
								return <Cell key={i}>{value}</Cell>;
							})}
						</tr>
					))}
				</tbody>
			</DataTable>
		</DataClip>
		<DataScroll>
			<Scrollbar height="19px" thumb="812px" small />
		</DataScroll>
	</DataPane>
);

const BottomBar = () => (
	<Footer>
		<PatchPane>
			<PatchList>
				{patches.map(([name, color]) => {
					const wrap = name.includes(' ') && !/Gray|Skin|Sky|100% Red/.test(name);
					return (
						<Patch key={name}>
							<PatchColor $color={color} />
							<PatchName $wrap={wrap}>{name}</PatchName>
						</Patch>
					);
				})}
			</PatchList>
			<Scrollbar height="12px" thumb="781px" small />
		</PatchPane>
		<PatternPane>
			<PatternButton aria-label="Pattern up">
				<Arrow dir="up" />
			</PatternButton>
			<PatternButton aria-label="Window pattern">
				<svg width="32" height="30" viewBox="0 0 32 30" aria-hidden="true">
					<rect x="1" y="1" width="30" height="28" rx="4" fill="#8a8a8a" stroke="#222" strokeWidth="2" />
					<rect x="6" y="6" width="20" height="18" fill="#b8b8b8" />
					<rect x="9" y="8" width="14" height="14" fill="#000" />
				</svg>
			</PatternButton>
		</PatternPane>
		<Controls>
			{controlIcons.map((icon, i) => (
				<Control key={i} $off={i > 3} aria-label={`Control ${i + 1}`}>
					<Knob as="span" $light={i < 4} $color="#333">
						<svg width="14" height="14" viewBox="0 0 16 16" fill="currentColor" aria-hidden="true">
							{icon}
						</svg>
					</Knob>
				</Control>
			))}
			<NavButton $back>
				<Knob as="span" $light $color="#222">
					«
				</Knob>
				Back
			</NavButton>
			<NavButton>
				Next
				<Knob as="span" $light $color="#222">
					»
				</Knob>
			</NavButton>
		</Controls>
		<Watermark>
			<svg width="94" height="74" viewBox="0 0 94 74" fill="none" strokeLinejoin="round" aria-hidden="true">
				<path d="M56 19L7 5l4 50 28 15 51-17-29-6-45 2M56 19l3 28" stroke="#d8d8d8" strokeWidth="7" />
				<path d="M16 21l8-2 11 13L60 3 37 43z" fill="#333" stroke="#d8d8d8" strokeWidth="3" />
				<path d="M56 19L7 5l4 50 28 15 51-17-29-6-45 2M56 19l3 28" stroke="#9c2f33" strokeWidth="4" />
				<path d="M16 21l8-2 11 13L60 3 37 43z" fill="#333" />
			</svg>
			<WatermarkText>
				<b>NOTEBOOK</b>CHECK
			</WatermarkText>
		</Watermark>
	</Footer>
);

export default function App() {
	return (
		<Page>
			<GlobalStyle />
			<TitleBar>
				<AppIcon />
				CalMAN 2019 CalMAN Ultimate for Business 125 Days Remaining
				<WindowButtons>
					<WindowButton aria-label="Minimize">
						<svg width="10" height="10">
							<path d="M0 5h10" stroke="#000" />
						</svg>
					</WindowButton>
					<WindowButton aria-label="Restore">
						<svg width="11" height="11" fill="none" stroke="#000">
							<path d="M.5 2.5h8v8h-8zM2.500 2.500v-2h8v8h-2" />
						</svg>
					</WindowButton>
					<WindowButton aria-label="Close">
						<svg width="10" height="10">
							<path d="M0 0l10 10M10 0L0 10" stroke="#000" />
						</svg>
					</WindowButton>
				</WindowButtons>
			</TitleBar>
			<Brand>
				<LogoButton>
					CalMAN
					<RedKnob>
						<Arrow />
					</RedKnob>
				</LogoButton>
				<Rainbow />
			</Brand>
			<Body>
				<Navigation />
				<Content>
					<Tabs />
					<Report>
						<Upper>
							<Intro>
								<Heading>ColorChecker</Heading>
								<Description>
									Display analysis is performed with the X-Rite/
									<br />
									Pantone ColorChecker<sup>®</sup> target colors.
								</Description>
								<Formula>
									<label htmlFor="formula">dE Formula:</label>
									<SelectBox>
										<FormulaSelect id="formula" defaultValue="2000">
											<option>2000</option>
										</FormulaSelect>
										<svg width="10" height="8" aria-hidden="true">
											<path d="M0 0h10L5 8z" />
										</svg>
									</SelectBox>
								</Formula>
								<DeltaEChart />
							</Intro>
							<Middle>
								<DeltaCharts />
								<Strip>
									<StripSide>
										<span>Target</span>
										<span>Actual</span>
									</StripSide>
									{swatches.map(([name, actual, target]) => (
										<StripItem key={name}>
											<StripColor $actual={actual} $target={target} />
											<StripName>{name}</StripName>
										</StripItem>
									))}
								</Strip>
								<Scrollbar height="20px" thumb="104px" />
							</Middle>
							<CiePanel>
								<CieChart />
							</CiePanel>
						</Upper>
						<Lower>
							<Readings>
								<Stat>Avg dE2000: 2.27</Stat>
								<Stat>Max dE2000: 4.28</Stat>
								<ReadingTitle>Current Reading</ReadingTitle>
								<ReadingRow $pair>
									<span>x: 0.4415</span>
									<span>y: 0.3905</span>
								</ReadingRow>
								<ReadingRow>fL: 47.97</ReadingRow>
								<ReadingRow>cd/m²: 164.35</ReadingRow>
							</Readings>
							<Measurements />
						</Lower>
					</Report>
					<BottomBar />
				</Content>
			</Body>
		</Page>
	);
}
